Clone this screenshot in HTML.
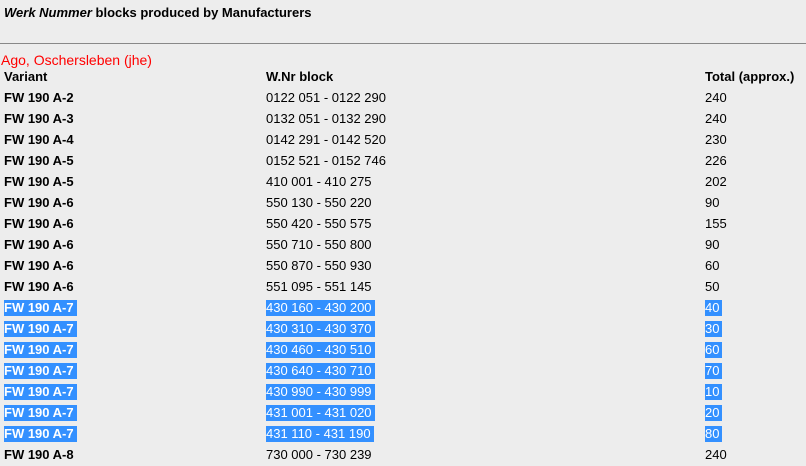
<!DOCTYPE html>
<html><head><style>
body{margin:0;width:806px;height:451px;overflow:hidden;background:#ededed;font-family:"Liberation Sans",Arial,sans-serif;color:#000;position:relative}
.t{position:absolute;left:4px;top:5px;font-size:13px;font-weight:bold}
hr{position:absolute;top:43px;left:0;width:806px;margin:0;border:0;border-top:1px solid #888;height:0}
.r{position:absolute;left:1px;top:52px;font-size:14px;color:#f00}
.row{position:absolute;left:0;width:806px;height:21px;font-size:13px;line-height:16px}
.row span{position:absolute;top:2px}
.a{left:4px;font-weight:bold}.b{left:266px}.c{left:705px}
.h span{font-weight:bold}
.s span{background:#3390ff;color:#fff;padding-right:3px}
</style></head><body>
<div class="t"><i>Werk Nummer</i> blocks produced by Manufacturers</div>
<hr>
<div class="r">Ago, Oschersleben (jhe)</div>
<div class="row h" style="top:67px"><span class="a">Variant</span><span class="b">W.Nr block</span><span class="c">Total (approx.)</span></div>
<div class="row" style="top:88px"><span class="a">FW 190 A-2</span><span class="b">0122 051 - 0122 290</span><span class="c">240</span></div>
<div class="row" style="top:109px"><span class="a">FW 190 A-3</span><span class="b">0132 051 - 0132 290</span><span class="c">240</span></div>
<div class="row" style="top:130px"><span class="a">FW 190 A-4</span><span class="b">0142 291 - 0142 520</span><span class="c">230</span></div>
<div class="row" style="top:151px"><span class="a">FW 190 A-5</span><span class="b">0152 521 - 0152 746</span><span class="c">226</span></div>
<div class="row" style="top:172px"><span class="a">FW 190 A-5</span><span class="b">410 001 - 410 275</span><span class="c">202</span></div>
<div class="row" style="top:193px"><span class="a">FW 190 A-6</span><span class="b">550 130 - 550 220</span><span class="c">90</span></div>
<div class="row" style="top:214px"><span class="a">FW 190 A-6</span><span class="b">550 420 - 550 575</span><span class="c">155</span></div>
<div class="row" style="top:235px"><span class="a">FW 190 A-6</span><span class="b">550 710 - 550 800</span><span class="c">90</span></div>
<div class="row" style="top:256px"><span class="a">FW 190 A-6</span><span class="b">550 870 - 550 930</span><span class="c">60</span></div>
<div class="row" style="top:277px"><span class="a">FW 190 A-6</span><span class="b">551 095 - 551 145</span><span class="c">50</span></div>
<div class="row s" style="top:298px"><span class="a">FW 190 A-7</span><span class="b">430 160 - 430 200</span><span class="c">40</span></div>
<div class="row s" style="top:319px"><span class="a">FW 190 A-7</span><span class="b">430 310 - 430 370</span><span class="c">30</span></div>
<div class="row s" style="top:340px"><span class="a">FW 190 A-7</span><span class="b">430 460 - 430 510</span><span class="c">60</span></div>
<div class="row s" style="top:361px"><span class="a">FW 190 A-7</span><span class="b">430 640 - 430 710</span><span class="c">70</span></div>
<div class="row s" style="top:382px"><span class="a">FW 190 A-7</span><span class="b">430 990 - 430 999</span><span class="c">10</span></div>
<div class="row s" style="top:403px"><span class="a">FW 190 A-7</span><span class="b">431 001 - 431 020</span><span class="c">20</span></div>
<div class="row s" style="top:424px"><span class="a">FW 190 A-7</span><span class="b">431 110 - 431 190</span><span class="c">80</span></div>
<div class="row" style="top:445px"><span class="a">FW 190 A-8</span><span class="b">730 000 - 730 239</span><span class="c">240</span></div>
</body></html>
